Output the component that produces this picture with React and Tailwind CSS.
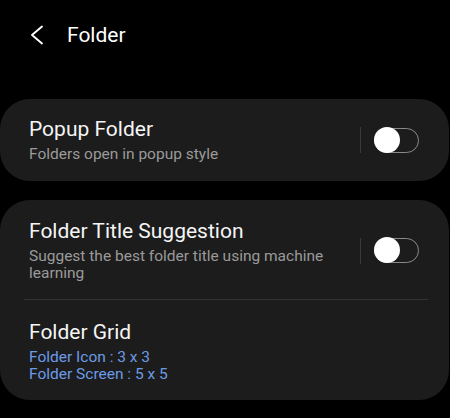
const BackIcon = () => (
  <svg width="14" height="20" viewBox="0 0 14 20" fill="none" className="shrink-0">
    <path d="M12 1.5 L2 10 L12 18.5" stroke="white" strokeWidth="1.9" strokeLinecap="round" strokeLinejoin="round" />
  </svg>
);

const Toggle = () => (
  <div className="flex items-center shrink-0">
    <div className="w-px h-[26px] bg-[#3a3a3a]" />
    <div className="relative ml-[13px] w-[45px] h-[25px] rounded-full border-[1.5px] border-[#8a8a8a]">
      <div className="absolute left-[-1.5px] top-[-2px] w-[26px] h-[26px] rounded-full bg-white" />
    </div>
  </div>
);

const SettingRow = ({ title, subtitle, blue, toggle, className = "" }) => (
  <div className={`flex items-center pl-[29px] pr-[30px] ${className}`}>
    <div className="flex-1 min-w-0 pr-[14px]">
      <p className="text-[21px] leading-[25px] text-[#f5f5f5]">{title}</p>
      {subtitle && (
        <p className="mt-[4px] text-[15.5px] leading-[17px] text-[#9a9a9a]">{subtitle}</p>
      )}
      {blue && (
        <div className="mt-[4px] text-[15.5px] leading-[17px] text-[#6c9be6]">
          {blue.map(line => <p key={line}>{line}</p>)}
        </div>
      )}
    </div>
    {toggle && <Toggle />}
  </div>
);

export default function App() {
  return (
    <div className="w-[450px] h-[418px] bg-black overflow-hidden font-['Roboto',sans-serif]">
      <header className="flex items-center h-[70px] pl-[30px]">
        <BackIcon />
        <h1 className="ml-[23px] text-[21px] leading-[24px] text-white">Folder</h1>
      </header>

      <section className="mt-[29px] mr-[1px] rounded-[30px] bg-[#1c1c1c] pt-[18px] pb-[18px]">
        <SettingRow title="Popup Folder" subtitle="Folders open in popup style" toggle />
      </section>

      <section className="mt-[19px] mr-[1px] rounded-[30px] bg-[#1c1c1c] pt-[19px] pb-[17px]">
        <SettingRow
          title="Folder Title Suggestion"
          subtitle="Suggest the best folder title using machine learning"
          toggle
        />
        <div className="ml-[24px] mr-[21px] mt-[17px] h-px bg-[#333333]" />
        <SettingRow
          className="pt-[20px]"
          title="Folder Grid"
          blue={["Folder Icon : 3 x 3", "Folder Screen : 5 x 5"]}
        />
      </section>
    </div>
  );
}
